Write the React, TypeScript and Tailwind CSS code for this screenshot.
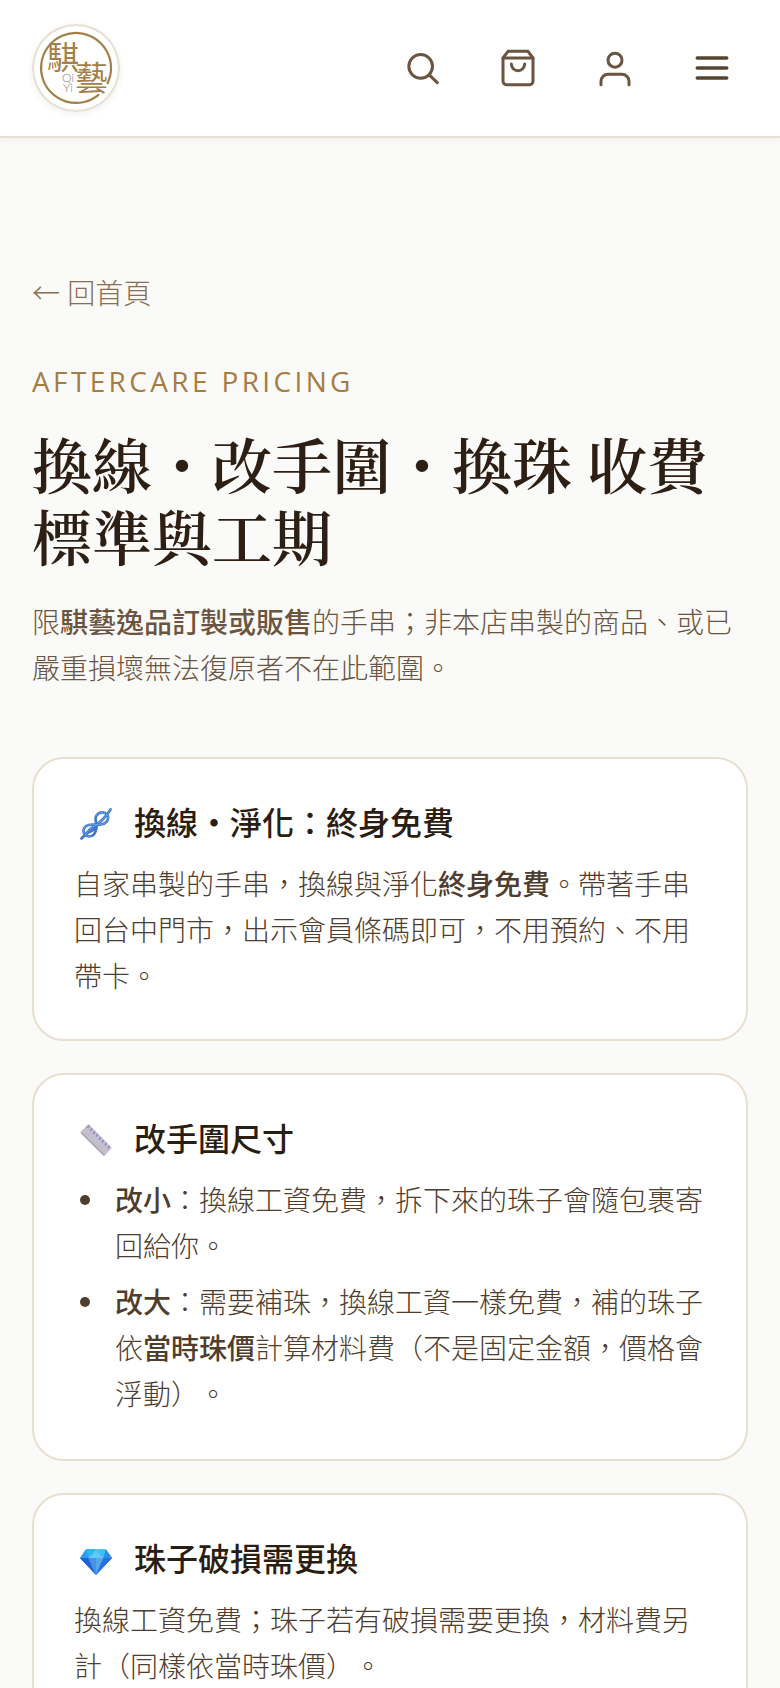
import type { ReactNode } from 'react';

function Logo() {
  return (
    <svg viewBox="0 0 88 88" className="size-[88px]" role="img" aria-label="騏藝">
      <path
        d="M75.5 59.3A35 35 0 1 0 66.5 70.8"
        fill="none"
        stroke="#a38048"
        strokeWidth="2.2"
        strokeLinecap="round"
      />
      <g fill="#a38048" className="font-['Noto_Sans_CJK_TC',sans-serif]">
        <text x="15" y="45" fontSize="32">騏</text>
        <text x="43" y="66" fontSize="33">藝</text>
      </g>
      <g fill="#8d8672" fontSize="12" className="font-['Lato',sans-serif] font-light">
        <text x="30" y="58">Qi</text>
        <text x="31" y="68">Yi</text>
      </g>
    </svg>
  );
}

const iconStroke = {
  viewBox: '0 0 24 24',
  fill: 'none',
  stroke: 'currentColor',
  strokeWidth: 1.8,
  strokeLinecap: 'round',
  strokeLinejoin: 'round',
} as const;

function SearchIcon() {
  return (
    <svg {...iconStroke} className="size-10" aria-hidden="true">
      <circle cx="11.8" cy="11" r="7.1" />
      <path d="m21.800 20.800-4.900-4.700" />
    </svg>
  );
}

function BagIcon() {
  return (
    <svg {...iconStroke} className="size-10" aria-hidden="true">
      <path d="M6 2 3 6v14a2 2 0 0 0 2 2h14a2 2 0 0 0 2-2V6l-3-4Z" />
      <path d="M3 6h18" />
      <path d="M16 9.600a4 4 0 0 1-8 0" />
    </svg>
  );
}

function UserIcon() {
  return (
    <svg {...iconStroke} className="size-10" aria-hidden="true">
      <circle cx="12" cy="7.3" r="4.2" />
      <path d="M20.400 22v-2a4.200 4.200 0 0 0-4.200-4.200H7.800A4.200 4.200 0 0 0 3.600 20v2" />
    </svg>
  );
}

function MenuIcon() {
  return (
    <svg {...iconStroke} strokeWidth={2.2} className="size-10" aria-hidden="true">
      <path d="M3.200 6h17.600M3.200 12h17.600M3.200 18h17.600" />
    </svg>
  );
}

function KnotIcon() {
  return (
    <svg viewBox="0 0 32 32" className="size-8" fill="none" strokeLinecap="round" aria-hidden="true">
      <g stroke="#3f78cc" strokeWidth="2.7">
        <path d="M1.500 30.500 6 26C10 22 14.500 24 16 18.500 17.200 14 14 11 16.500 7.500 19 3.500 25 3 27.500 7.500 29.500 12 26 15.500 21 16.500 15 17.600 7 14.500 4 20.500 2 25.500 7 29.500 11.500 28 16.500 26 16 21.500 16.800 17.500" />
        <path d="M6.500 25.500C10 20 14 18.500 18 15.500S25.500 9.500 30.500 1.500" />
      </g>
      <g stroke="#7fb0ee" strokeWidth="0.9" strokeDasharray="1.6 1.4">
        <path d="M16.300 7.500C19 3.500 25 3 27.500 7.500 29.500 12 26 15.500 21 16.500 15 17.600 7 14.500 4 20.500 2 25.500 7 29.500 11.500 28" />
        <path d="M6.500 25.500C10 20 14 18.500 18 15.500S25.500 9.500 30.500 1.500" />
      </g>
    </svg>
  );
}

function RulerIcon() {
  return (
    <svg viewBox="0 0 32 32" className="size-8" aria-hidden="true">
      <path d="M1 7.500 7.500.8q1-.8 2 0L31 22.800q.8 1 0 2L25 31.200q-1 .8-2 0L1 9.500q-.8-1 0-2Z" fill="#c3bfcb" />
      <path d="M.8 9 1 9.500 23 31.200q1 .8 2 0l.8-.9q-1.200.5-2-.2L1.800 8Z" fill="#aba7b4" />
      <path
        d="m8.700 2.200-.9 1.300M11.600 5.100l-.9 1.300M14.500 8l-.9 1.300M17.400 10.900l-.9 1.300M20.300 13.800l-.9 1.300M23.200 16.700l-.9 1.300M26.100 19.600l-.9 1.300M29 22.500l-.9 1.300"
        stroke="#8d78e8"
        strokeWidth="1.400"
        strokeLinecap="round"
      />
    </svg>
  );
}

function GemIcon() {
  return (
    <svg viewBox="0 0 32 32" className="size-8" aria-hidden="true">
      <path d="M6 5.500h20l6 8.500-16 17L0 14Z" fill="#2587e8" />
      <path d="M6 5.500h10L8.500 14H0Z" fill="#2f9af0" />
      <path d="M6 5.500h10L8.500 14Z" fill="#22b9f5" />
      <path d="M16 5.500h10L23.500 14Z" fill="#35c3f8" />
      <path d="M26 5.500 32 14h-8.500Z" fill="#2a8fe9" />
      <path d="M16 5.500 23.500 14h-15Z" fill="#62c9f5" />
      <path d="M0 14h8.500L16 31Z" fill="#1c62d8" />
      <path d="M8.500 14h15L16 31Z" fill="#55a6ee" />
      <path d="M8.500 14H16v17Z" fill="#4a8fe8" />
      <path d="M23.500 14H32L16 31Z" fill="#2671df" />
    </svg>
  );
}

function HeaderButton({ label, children }: { label: string; children: ReactNode }) {
  return (
    <button type="button" aria-label={label} className="flex size-[72px] items-center justify-center">
      {children}
    </button>
  );
}

function Card({ icon, title, children }: { icon: ReactNode; title: string; children: ReactNode }) {
  return (
    <section className="rounded-[32px] border-2 border-[#e8dfd0] bg-white p-10 text-[28px] leading-[46px] font-light text-[#4f3d2d]">
      <h2 className="mb-[14px] flex items-center gap-4 text-[32px] leading-[48px] font-medium text-[#2a1d12]">
        <span className="flex w-11 justify-center pt-0.5">{icon}</span>
        {title}
      </h2>
      {children}
    </section>
  );
}

function Strong({ children }: { children: ReactNode }) {
  return <strong className="font-medium">{children}</strong>;
}

function Bullet({ children }: { children: ReactNode }) {
  return (
    <li className="flex">
      <span className="mt-[18px] mr-[25px] ml-[6px] size-2.5 shrink-0 rounded-full bg-[#4f3d2d]" />
      <p>{children}</p>
    </li>
  );
}

export default function App() {
  return (
    <div
      lang="zh-Hant"
      className="min-h-screen bg-[#fafaf8] font-['Open_Sans','Noto_Sans_CJK_TC',sans-serif] [text-spacing-trim:space-all]"
    >
      <header className="flex items-center justify-between border-b-2 border-[#eadfd2] bg-white px-8 py-6 shadow-[0_2px_8px_rgba(60,60,50,0.06)]">
        <a href="/" className="rounded-full bg-white shadow-[inset_0_0_0_2px_#e6e1d3,0_2px_6px_rgba(60,60,50,0.08)]">
          <Logo />
        </a>
        <nav className="flex gap-[25px] text-[#6b5440]">
          <HeaderButton label="搜尋"><SearchIcon /></HeaderButton>
          <HeaderButton label="購物車"><BagIcon /></HeaderButton>
          <HeaderButton label="會員"><UserIcon /></HeaderButton>
          <span className="text-[#574430]"><HeaderButton label="選單"><MenuIcon /></HeaderButton></span>
        </nav>
      </header>

      <main className="px-8 pt-[135px] pb-16">
        <a href="/" className="block w-fit text-[28px] leading-10 font-light text-[#8b6f52]">← 回首頁</a>
        <p className="mt-12 text-[28px] leading-10 tracking-[0.12em] text-[#a67c45]">AFTERCARE PRICING</p>
        <h1 className="mt-[26px] font-['Noto_Serif_CJK_TC','Noto_Serif_TC','Noto_Sans_CJK_TC',serif] text-[60px] leading-[72px] font-semibold text-[#2d1f14]">
          換線・改手圍・換珠 收費標準與工期
        </h1>
        <p className="mt-7 text-[28px] leading-[46px] font-light text-[#6b5440]">
          限<Strong>騏藝逸品訂製或販售</Strong>的手串；非本店串製的商品、或已嚴重損壞無法復原者不在此範圍。
        </p>

        <div className="mt-[66px] flex flex-col gap-8">
          <Card icon={<KnotIcon />} title="換線・淨化：終身免費">
            <p>
              自家串製的手串，換線與淨化<Strong>終身免費</Strong>。帶著手串回台中門市，出示會員條碼即可，不用預約、不用帶卡。
            </p>
          </Card>
          <Card icon={<RulerIcon />} title="改手圍尺寸">
            <ul className="flex list-none flex-col gap-2.5 pb-0.5">
              <Bullet>
                <Strong>改小</Strong>：換線工資免費，拆下來的珠子會隨包裹寄回給你。
              </Bullet>
              <Bullet>
                <Strong>改大</Strong>：需要補珠，換線工資一樣免費，補的珠子依<Strong>當時珠價</Strong>計算材料費（不是固定金額，價格會浮動）。
              </Bullet>
            </ul>
          </Card>
          <Card icon={<GemIcon />} title="珠子破損需更換">
            <p>換線工資免費；珠子若有破損需要更換，材料費另計（同樣依當時珠價）。</p>
          </Card>
        </div>
      </main>
    </div>
  );
}
